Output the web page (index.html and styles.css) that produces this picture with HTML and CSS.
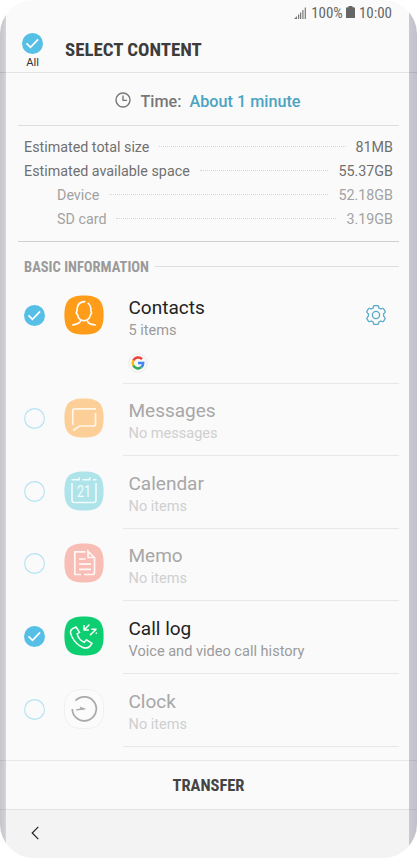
FILE: index.html
```html
<!DOCTYPE html>
<html lang="en">
<head>
<meta charset="utf-8">
<title>Select content</title>
<link rel="stylesheet" href="styles.css">
</head>
<body>
<svg class="defs" width="0" height="0" aria-hidden="true">
  <defs>
    <symbol id="checked" viewBox="0 0 21 21"><circle cx="10.5" cy="10.5" r="10.5" fill="#55bfe6"/><path d="M4.500 10.300l4 4 7.600-8" fill="none" stroke="#fff" stroke-width="1.700"/></symbol>
    <symbol id="unchecked" viewBox="0 0 21 21"><circle cx="10.5" cy="10.5" r="9.900" fill="none" stroke="#b2e3f4" stroke-width="1.100"/></symbol>
    <symbol id="tile" viewBox="0 0 40 40"><path d="M20 .4C34.500.4 39.600 5.500 39.600 20S34.500 39.600 20 39.600.4 34.500.4 20 5.500.4 20 .4z"/></symbol>
  </defs>
</svg>
<div class="phone">
  <main class="screen">
    <div class="status">
      <svg class="signal" viewBox="0 0 12 12"><path d="M0 12l3-3v3zM4 7.500h1.200V12H4zM6 5.500h1.200V12H6zM8.300 3h1.200v9H8.300zM10.700.5h1.200V12h-1.200z" fill="#777"/></svg>
      <span class="pct">100%</span>
      <svg class="battery" viewBox="0 0 9 12"><path d="M2.500 0h4v1.200H8.200L9 2v10H0V2l.8-.8h1.700z" fill="#666"/></svg>
      <span class="clock">10:00</span>
    </div>
    <header class="header">
      <div class="all"><svg class="check"><use href="#checked"/></svg><span>All</span></div>
      <h1>SELECT CONTENT</h1>
    </header>
    <div class="time">
      <svg viewBox="0 0 16 16" fill="none" stroke="#777" stroke-width="1.400"><circle cx="8" cy="8" r="7"/><path d="M8 3.500V8.400h4"/></svg>
      <span class="label">Time:</span><span class="value">About 1 minute</span>
    </div>
    <section class="sizes">
      <div class="size"><span>Estimated total size</span><i></i><span>81MB</span></div>
      <div class="size"><span>Estimated available space</span><i></i><span>55.37GB</span></div>
      <div class="size sub"><span>Device</span><i></i><span>52.18GB</span></div>
      <div class="size sub"><span>SD card</span><i></i><span>3.19GB</span></div>
    </section>
    <div class="section"><h2>BASIC INFORMATION</h2><i></i></div>
    <div class="list">
      <div class="row contacts">
        <svg class="check"><use href="#checked"/></svg>
        <svg class="icon" viewBox="0 0 40 40"><use href="#tile" fill="#ff9d1a"/><g fill="none" stroke="#fff" stroke-width="1.600" stroke-linecap="round" stroke-linejoin="round"><path d="M20.800 6.600c-4.600.2-7.300 2.700-7.700 7-.1 1.300.1 2.200-.3 2.800-.8 1.400-.2 2.800.8 3.400.5 3.300 2.700 5.500 6.300 6 3.600-.5 5.900-2.700 6.500-6 1-.7 1.400-2 .7-3.300-.5-.8 0-1.700-.2-3-.3-2.300-1.200-4-2.700-5.100"/><path d="M16.800 25c0 3.500-4.700 4.300-8 5M23.500 26c.6 3 4.300 3.600 7.700 4"/></g></svg>
        <div class="body"><h3>Contacts</h3><p>5 items</p>
          <svg class="google" viewBox="0 0 20 20"><circle cx="10" cy="10" r="9.300" fill="#f7f7f7" stroke="#e8e8e8" stroke-width=".8"/><g fill="none" stroke-width="2.500"><path d="M14 6.200A5.300 5.300 0 0 0 5.300 7.500" stroke="#ea4335"/><path d="M5.300 7.500a5.300 5.300 0 0 0 0 5" stroke="#fbbc05"/><path d="M5.300 12.500a5.300 5.300 0 0 0 7.900 1.800" stroke="#34a853"/><path d="M13.200 14.300A5.300 5.300 0 0 0 15.200 10H10" stroke="#4285f4"/></g></svg>
        </div>
        <svg class="gear" viewBox="0 0 20 20" fill="none" stroke="#55aac8" stroke-width="1.300" stroke-linejoin="round"><circle cx="10" cy="10" r="3.600"/><path d="M8.200.7h3.600q.6 0 .7.600l.4 1.700 1.600 1 2-.6q.8-.2 1.100.4l1.500 2.600q.3.600-.1 1l-1.400 1.500v2.200l1.400 1.500q.4.400.1 1l-1.500 2.600q-.3.600-1.100.4l-2-.6-1.600 1-.4 1.700q-.1.600-.7.600H8.200q-.6 0-.7-.6L7.100 17l-1.600-1-2 .6q-.8.200-1.100-.4L.9 13.600q-.3-.6.100-1l1.400-1.500V8.900L1 7.400q-.4-.4-.1-1l1.500-2.600q.3-.6 1.100-.4l2 .6 1.600-1 .4-1.700q.1-.6.700-.6z"/></svg>
      </div>
      <div class="row off">
        <svg class="check"><use href="#unchecked"/></svg>
        <svg class="icon" viewBox="0 0 40 40"><use href="#tile" fill="#fdcf98"/><path d="M32 10.800H10.800q-2 0-2 2V27M31.500 15v11q0 2-2 2H15.500L9.200 32.500" fill="none" stroke="#fff6e9" stroke-width="1.700"/></svg>
        <div class="body"><h3>Messages</h3><p>No messages</p></div>
      </div>
      <div class="row off">
        <svg class="check"><use href="#unchecked"/></svg>
        <svg class="icon" viewBox="0 0 40 40"><use href="#tile" fill="#aee3ea"/><path d="M8 12v17q0 2.500 2.500 2.500h19q2.500 0 2.500-2.500V12M7.500 8.800h7.600V6.500M18.200 8.800h7.600V6.500M29 8.800h3.500" fill="none" stroke="#f1fcfd" stroke-width="1.600"/><text class="day" x="20" y="26" text-anchor="middle" textLength="14" lengthAdjust="spacingAndGlyphs">21</text></svg>
        <div class="body"><h3>Calendar</h3><p>No items</p></div>
      </div>
      <div class="row off">
        <svg class="check"><use href="#unchecked"/></svg>
        <svg class="icon" viewBox="0 0 40 40"><use href="#tile" fill="#f8beb5"/><path d="M21.500 8.800H10.800v22.700H17M20 31.500h8.500q2 0 2-2V15.500M24 8.300v6.200h6.200zM15 16h6.500M15 21.200h12M15 26.400h12" fill="none" stroke="#fff7f5" stroke-width="1.700"/></svg>
        <div class="body"><h3>Memo</h3><p>No items</p></div>
      </div>
      <div class="row">
        <svg class="check"><use href="#checked"/></svg>
        <svg class="icon" viewBox="0 0 40 40"><use href="#tile" fill="#0dce71"/><g fill="none" stroke="#fff" stroke-width="1.500" stroke-linecap="round" stroke-linejoin="round"><path d="M12 11l-3.400 1.700c-2.500 1.500-2.600 4.600-.6 8.300 2.500 4.600 6 8.200 10.300 10.200 3 1.400 5.500 1.200 7.500-.8l2.300-3.100-5.600-3.500-2.400 2.600c-3.600-1.700-6-4.700-7-8.500l2.500-1.500z"/><path d="M25 9l-5 5M20 9.800V14h4.300M26.500 18.800l5.300-5.300M27.800 13.300h4.200M32.300 17v.3"/></g></svg>
        <div class="body"><h3>Call log</h3><p>Voice and video call history</p></div>
      </div>
      <div class="row off">
        <svg class="check"><use href="#unchecked"/></svg>
        <svg class="icon" viewBox="0 0 40 40"><use href="#tile" fill="#fbfbfb" stroke="#eee" stroke-width=".8"/><path d="M8.300 20a12 12 0 1 0 3.200-8.300" fill="none" stroke="#a9a9a9" stroke-width="1.700"/><path d="M12.200 20.200l4.300-.8-.7-2 5.900 2.300-.5.900-8.800.9z" fill="#aaa"/></svg>
        <div class="body"><h3>Clock</h3><p>No items</p></div>
      </div>
    </div>
  </main>
  <footer class="transfer"><span>TRANSFER</span></footer>
  <nav class="nav"><svg viewBox="0 0 8 14"><path d="M7.300.8L1.200 7l6.100 6.200" fill="none" stroke="#222" stroke-width="1.200"/></svg></nav>
</div>
</body>
</html>
```
FILE: styles.css
```css
* { box-sizing: border-box; }
body { margin: 0; background: #fff; font-family: Roboto, "Liberation Sans", sans-serif; color: #222; }
.defs { display: block; height: 0; }
h1, h2, h3, p { margin: 0; font-weight: 400; }
svg { display: block; flex: none; }
.phone { width: 417px; height: 858px; border-radius: 34px; overflow: hidden; display: flex; flex-direction: column;
  background: linear-gradient(90deg, #c5c6cb 0, #cdced3 4px, #d6d7da 6px, #fafafa 6px, #fafafa 409px, #c9cad1 409px, #c0c1c9 417px); }
.screen { height: 760px; padding: 0 8px 0 6px; }
.status { height: 26px; display: flex; justify-content: flex-end; align-items: center; padding-right: 17px; color: #666; font-size: 15px; font-stretch: 75%; }
.signal { width: 12px; height: 12px; margin-right: 5px; }
.battery { width: 9px; height: 12px; margin: 0 4px 0 3px; position: relative; top: -1px; }
.header { height: 46px; display: flex; padding-left: 16px; }
.all { width: 21px; padding-top: 7px; display: flex; flex-direction: column; align-items: center; font-size: 11.200px; line-height: 17px; color: #333; }
.check { width: 21px; height: 21px; }
h1 { margin: 12px 0 0 22px; font-size: 18.900px; line-height: 24px; font-weight: 700; font-stretch: 75%; color: #3c3c3c; white-space: nowrap; }
.time { height: 54px; margin: 0 -8px 0 -6px; border-top: 1px solid rgba(0,0,0,.09); display: flex; align-items: center; padding: 3px 0 0 115px; font-size: 16.200px; font-weight: 500; color: #777; }
.time svg { width: 16px; height: 16px; margin-top: -2px; }
.time .label { margin: 0 8px 0 9.500px; }
.time .value { color: #4ba3c3; }
.sizes { height: 117px; margin: -1px 10px 0 12px; border-top: 1px solid #dedede; border-bottom: 1px solid #d0d0d0; padding: 9px 6px 0; }
.size { height: 24px; display: flex; align-items: center; font-size: 14.300px; line-height: 24px; color: #707070; }
.size i { flex: 1; border-top: 1px dotted #d5d5d5; margin: -2px 10px 0; }
.sub { padding-left: 33px; color: #a2a2a2; }
.section { height: 38px; margin: 0 10px 0 18px; display: flex; align-items: center; padding-top: 13px; }
h2 { font-size: 14.500px; font-weight: 700; font-stretch: 75%; color: #9a9a9a; white-space: nowrap; }
.section i { flex: 1; height: 1px; background: #dedede; margin: -2px 0 0 6px; }
.row { height: 72.660px; display: flex; padding: 24.500px 10px 0 18px; }
.icon { width: 40px; height: 40px; margin: -10px 0 0 19px; }
.body { margin: -24.500px 0 0 19px; width: 276px; border-bottom: 1px solid #e7e7e7; padding: 14.600px 0 0 5.500px; }
h3 { font-size: 19px; line-height: 26px; }
p { font-size: 14.550px; line-height: 20px; color: #9b9b9b; }
.off h3 { color: #a7a7a7; }
.off p { color: #cfcfcf; }
.contacts { height: 103.500px; }
.contacts .body { padding-top: 15px; }
.google { width: 20px; height: 20px; margin: 12px 0 0 -.5px; }
.gear { width: 20px; height: 20px; margin-left: -33px; }
.day { font-family: Roboto, sans-serif; font-size: 16px; fill: #f1fcfd; }
.transfer { height: 49px; border-top: 1px solid rgba(0,0,0,.07); display: flex; justify-content: center; align-items: center; font-size: 16.500px; font-weight: 700; font-stretch: 75%; color: #444; padding-top: 1px; }
.nav { height: 49px; border-top: 1px solid rgba(0,0,0,.06); background: linear-gradient(90deg, transparent 6px, #f3f3f3 6px, #f3f3f3 409px, transparent 409px); padding: 16px 0 0 31px; }
.nav svg { width: 8px; height: 14px; }
```
